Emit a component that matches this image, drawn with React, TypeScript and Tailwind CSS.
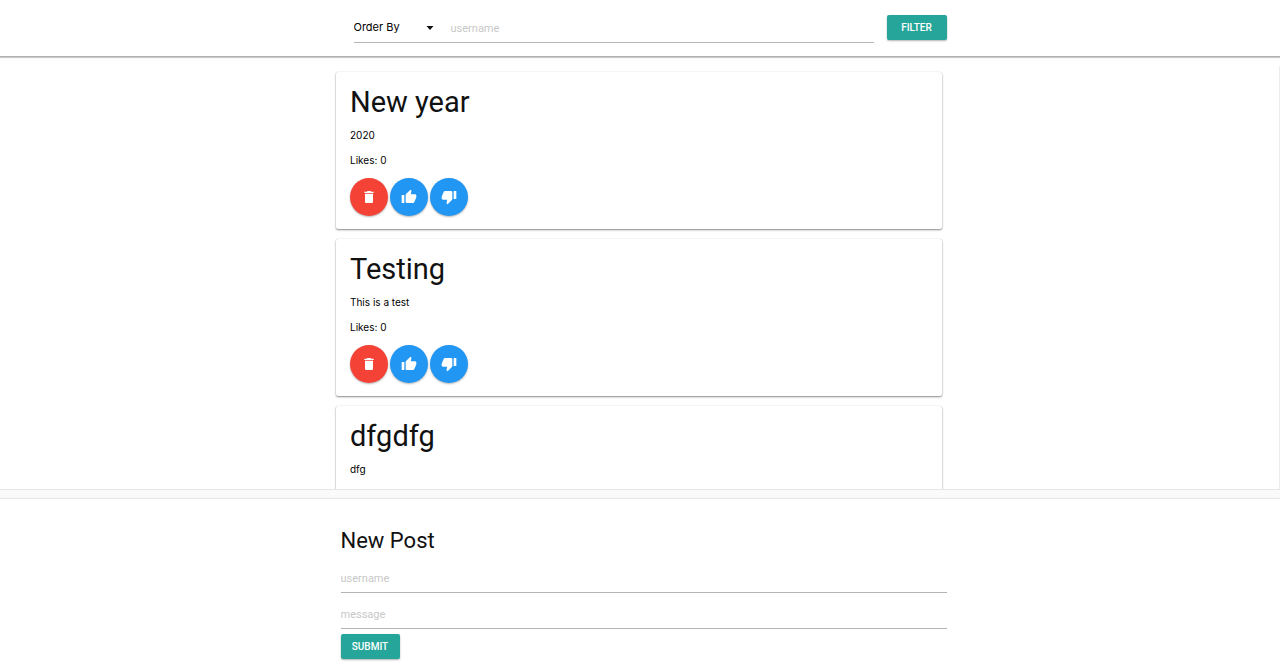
import React from 'react';
import { MdDelete, MdThumbDown, MdThumbUp } from 'react-icons/md';

type Post = { id: number; title: string; message: string; likes: number };

const posts: Post[] = [
  { id: 1, title: 'New year', message: '2020', likes: 0 },
  { id: 2, title: 'Testing', message: 'This is a test', likes: 0 },
  { id: 3, title: 'dfgdfg', message: 'dfg', likes: 0 },
];

const raised = 'shadow-[0_1px_2px_rgba(0,0,0,0.3)]';
const textButton = `h-[25px] shrink-0 rounded-xs bg-[#26a69a] text-center font-['Roboto',sans-serif] text-[10px] font-medium uppercase text-white ${raised}`;
const roundButton = `flex size-[38px] items-center justify-center rounded-full text-white ${raised}`;
const inputText =
  "bg-transparent pt-[2px] font-['Roboto',sans-serif] text-[11px] placeholder:text-[#c8c8c8] outline-none";
const lineInput = `block w-full border-b border-[#b4b4b4] ${inputText}`;
const heading = "font-['Roboto',sans-serif] text-[#111]";

function FilterBar() {
  return (
    <header className="z-10 shrink-0 border-b border-[#b0b0b0] bg-white pl-[7px] shadow-[0_1px_1px_rgba(0,0,0,0.2)]">
      <form className="mx-auto flex h-14 w-[606px] max-w-full items-start gap-[13px] pl-[13px]">
        <div className="flex h-[43px] grow items-end border-b border-[#b4b4b4]">
          <div className="relative flex h-[29px] w-[97px] items-center">
            <select
              aria-label="Order By"
              className="w-[84px] appearance-none bg-transparent text-[11px] text-black outline-none"
              defaultValue=""
            >
              <option value="">Order By</option>
              <option value="likes">Likes</option>
              <option value="date">Date</option>
            </select>
            <svg className="pointer-events-none absolute left-[72px] top-[13px]" width="8" height="4" viewBox="0 0 8 4" aria-hidden="true">
              <path d="M0.5 0h7L4 4z" fill="#111" />
            </svg>
          </div>
          <input aria-label="Filter by username" placeholder="username" className={`h-[29px] grow ${inputText}`} />
        </div>
        <button type="button" className={`mt-[15px] w-[60px] ${textButton}`}>
          Filter
        </button>
      </form>
    </header>
  );
}

function PostCard({ post }: { post: Post }) {
  return (
    <article className="rounded-xs bg-white px-[14px] pb-[13px] pt-3 shadow-[0_1px_2px_rgba(0,0,0,0.45),0_0_1px_rgba(0,0,0,0.2)]">
      <h2 className={`text-[29px] leading-9 ${heading}`}>{post.title}</h2>
      <p className="mt-[7px] text-[10px] leading-4">{post.message}</p>
      <p className="mt-[9px] text-[10px] leading-4">Likes: {post.likes}</p>
      <div className="mt-[10px] flex gap-[2px]">
        <button type="button" aria-label="Delete" className={`bg-[#f44336] ${roundButton}`}>
          <MdDelete size={16} />
        </button>
        <button type="button" aria-label="Like" className={`bg-[#2196f3] ${roundButton}`}>
          <MdThumbUp size={16} />
        </button>
        <button type="button" aria-label="Dislike" className={`bg-[#2196f3] ${roundButton}`}>
          <MdThumbDown size={16} />
        </button>
      </div>
    </article>
  );
}

function NewPostForm() {
  return (
    <section className="shrink-0 pb-[10px] pl-[7px] pt-[26px]">
      <form className="mx-auto w-[606px] max-w-full">
        <h1 className={`text-[22px] leading-8 ${heading}`}>New Post</h1>
        <input aria-label="Username" placeholder="username" className={`mt-[6px] h-[30px] ${lineInput}`} />
        <input aria-label="Message" placeholder="message" className={`mt-[6px] h-[30px] ${lineInput}`} />
        <button type="button" className={`mt-[5px] w-[59px] ${textButton}`}>
          Submit
        </button>
      </form>
    </section>
  );
}

export default function App() {
  return (
    <div className="flex h-screen flex-col overflow-hidden bg-white font-['Inter','Liberation_Sans',sans-serif] text-black">
      <FilterBar />
      <main className="mt-[9px] min-h-0 grow overflow-x-hidden overflow-y-auto border-r border-[#ececec] pr-px pt-[6px] [scrollbar-width:none]">
        <div className="mx-auto flex w-[606px] max-w-full flex-col gap-[10px]">
          {posts.map((post) => (
            <PostCard key={post.id} post={post} />
          ))}
        </div>
      </main>
      <div className="h-[10px] shrink-0 border-y border-[#e6e6e6] bg-[#fafafa]" />
      <NewPostForm />
    </div>
  );
}
